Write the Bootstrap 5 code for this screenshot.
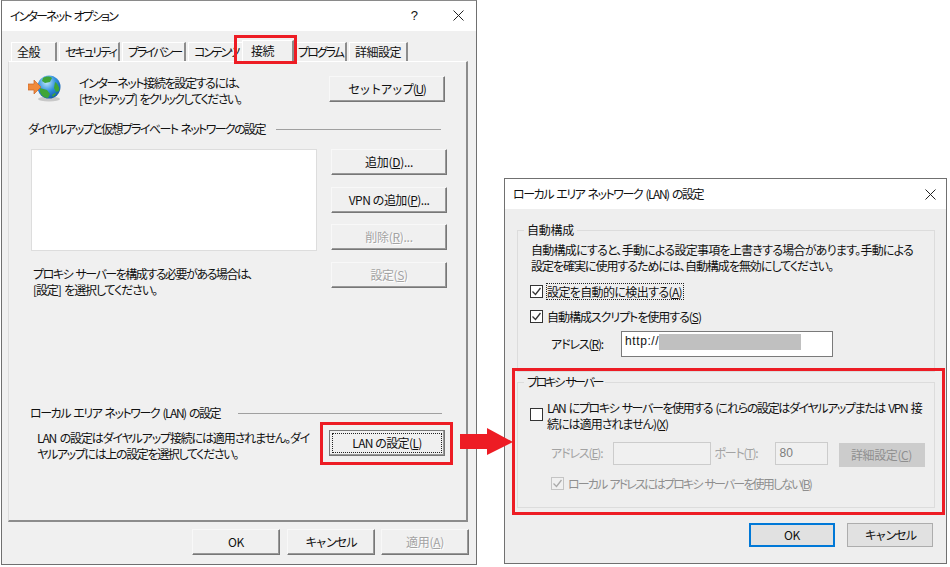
<!DOCTYPE html>
<html lang="ja">
<head>
<meta charset="utf-8">
<title>インターネット オプション</title>
<link href="https://cdn.jsdelivr.net/npm/bootstrap@5.3.0/dist/css/bootstrap.min.css" rel="stylesheet">
<style>
html,body{margin:0;width:950px;height:567px;overflow:hidden;background:#fff}
body{font-family:"Noto Sans CJK JP","Liberation Sans",sans-serif;font-size:12px;line-height:15.5px;color:#111;font-feature-settings:"palt";word-spacing:2px;position:relative}
.l25{letter-spacing:-.25px}.l30{letter-spacing:-.3px}.l33{letter-spacing:-.33px}.l40{letter-spacing:-.4px}.l45{letter-spacing:-.45px}.l50{letter-spacing:-.5px}.l55{letter-spacing:-.55px}.l62{letter-spacing:-.62px}.l65{letter-spacing:-.65px}.l74{letter-spacing:-.74px}.l98{letter-spacing:-.98px}.l102{letter-spacing:-1.02px}.l104{letter-spacing:-1.04px}.l112{letter-spacing:-1.12px}.l114{letter-spacing:-1.14px}.l115{letter-spacing:-1.15px}.l118{letter-spacing:-1.18px}.l128{letter-spacing:-1.28px}.l135{letter-spacing:-1.35px}.l138{letter-spacing:-1.38px}.l147{letter-spacing:-1.47px}.l158{letter-spacing:-1.58px}.l162{letter-spacing:-1.62px}.l184{letter-spacing:-1.84px}.l185{letter-spacing:-1.85px}.l186{letter-spacing:-1.86px}.l188{letter-spacing:-1.88px}.l200{letter-spacing:-1.98px}.l210{letter-spacing:-2.1px}.l215{letter-spacing:-2.15px}.l232{letter-spacing:-2.32px}
.ln{display:block;white-space:nowrap}
.dlg{position:absolute;background:#f0f0f0;border:1px solid #707070;display:flex;flex-direction:column}
.dlg-a{left:1px;top:0;width:476px;height:565px;border-top-color:#8a8a8a}
.dlg-b{left:504px;top:178px;width:443px;height:386px;background:#eeeeee}
.ttl{background:#fff;height:30px;flex:none;display:flex;align-items:center;padding-left:8px;padding-right:12px;white-space:nowrap}
.dlg-a .ttl{padding-bottom:1px}
.dlg-b .ttl{padding-left:8px;padding-right:10px}
.ttl-q{margin-right:35px;font-size:13px;font-family:"Liberation Sans",sans-serif}
.tabs{height:22px;margin-top:8px;flex:none;align-items:flex-end;flex-wrap:nowrap;padding-left:9px;position:relative}
.wtab{height:19px;padding:0 0 0 5px;color:#111;background:#f0f0f0;border:1px solid #fff;border-right:2px solid #8c8c8c;border-bottom:0;white-space:nowrap;overflow:hidden;margin-right:2px;line-height:18px;flex:none}
.wtab:hover{color:#111}
.wtab-on{height:22px;margin-left:-2px;margin-right:-4px;position:relative;z-index:2;padding-left:8px;line-height:20px;margin-bottom:-1px}
.w5{padding-left:7px}
.w1{width:46px}.w2{width:61px}.w3{width:64px}.w4{width:56px;margin-right:0}.w5{width:57px}.w6{width:52px}.w7{width:59px;margin-right:0}
.pane{margin-left:6px;width:460px;height:461px;flex:none;border:1px solid #fff;border-right:2px solid #8c8c8c;border-bottom:2px solid #8c8c8c;border-left-color:#dcdcdc;border-top-color:#fff;padding:14px 0 0 19px}
.btn.cbtn{--bs-btn-padding-y:0;--bs-btn-padding-x:0;font-size:12px;line-height:20px;border-radius:0;background:#f0f0f0;color:#111;border:1px solid;border-color:#f8f8f8 #777 #777 #f8f8f8;box-shadow:inset -1px -1px 0 #999;height:26px;width:116px;flex:none;font-family:inherit;white-space:nowrap}
.btn.cbtn.off{color:#a3a3a3;text-shadow:1px 1px 0 #fff;opacity:1}
.b-foc{padding:2px;background:#f0f0f0;border-color:#f8f8f8 #555 #555 #f8f8f8!important;outline:1px solid #777;outline-offset:-1px}
.foc-in{display:block;border:1px dotted #222;height:20px;line-height:18px}
.b-low{width:88px!important}
.row-a{height:26px}
.ico{width:34px;height:28px;flex:none;margin-right:17px;margin-top:-2px}
.ta{width:230px;margin-top:-1px;margin-right:20px}
.gh{display:flex;align-items:center;height:16px;white-space:nowrap}
.gh i{display:block;height:1px;background:#a0a0a0;flex:none}
.g1{margin-top:19px}.g1 i{width:165px;margin-left:11px}
.g2{margin-top:108px;margin-left:2px}.g2 i{width:204px;margin-left:18px}
.lst{width:286px;height:102px;background:#fff;border:1px solid;border-color:#6b6b6b #fff #fff #6b6b6b;outline:1px solid #ddd;outline-offset:-1px}
.main-r{margin-top:12px;height:148px;margin-left:3px}
.prox{margin-top:15px;margin-left:2px;line-height:16px}
.col-b{margin-left:14px;gap:11.7px}
.lan{margin-top:9px;margin-left:9px}
.lan-t{width:278px;margin-top:0;margin-right:14px}
.foot{margin-top:7px;margin-left:190px;gap:6.5px}
.grp{border:1px solid #dcdcdc;margin:13px 0 0 12px;width:418px;padding:0 0 0 12px;flex:none}
.grp legend{float:none;width:auto;font-size:12px;line-height:16px;padding:0 3px;margin:0 0 0 -6px;white-space:nowrap}
.grp-1{height:150px}
.grp-2{height:134px;margin-top:2px;}
.t-a{margin-top:4px;line-height:16px;margin-left:1px}
.form-check-input.chk{width:13px;height:13px;margin:0;border-radius:0;border:1px solid #333;background-color:#fff;flex:none;opacity:1;box-shadow:none}
.form-check-input.chk:checked{background-color:#fff;border-color:#333;background-image:url("data:image/svg+xml,%3Csvg xmlns='http://www.w3.org/2000/svg' viewBox='0 0 13 13'%3E%3Cpath d='M2.5 6.5l3 3 5-6.5' fill='none' stroke='%23333' stroke-width='1.3'/%3E%3C/svg%3E");background-size:13px}
.form-check-input.chk:disabled{border-color:#bdbdbd;opacity:1}
.form-check-input.chk:checked:disabled{background-color:#f0f0f0;border-color:#c4c4c4;background-image:url("data:image/svg+xml,%3Csvg xmlns='http://www.w3.org/2000/svg' viewBox='0 0 13 13'%3E%3Cpath d='M2.5 6.5l3 3 5-6.5' fill='none' stroke='%23aaa' stroke-width='1.3'/%3E%3C/svg%3E")}
.crow{display:flex;align-items:center;height:18px;gap:3px;white-space:nowrap}
.lab{padding:0 1px 0 0;border:1px dotted transparent;line-height:15px}
.lab-f{border-color:#222}
.cr1{margin-top:8px}.cr2{margin-top:7px}
.addr{margin-top:6px;height:26px;margin-left:21px;white-space:nowrap}
.fc{border-radius:0;font-size:12px;padding:0 3px;min-height:0;font-family:"Liberation Sans",sans-serif;color:#111;background:#fff;border:1px solid #7a7a7a}
.fc-u{width:212px;height:26px;margin-left:18px;display:flex;align-items:flex-start;padding-top:2px;line-height:15px}
.htp{letter-spacing:.6px;width:34px;flex:none}
.mask{display:block;width:142px;height:16px;background:#c0c0c0}
.prx-top{margin-top:10px;align-items:flex-start;height:auto;gap:4px}
.prx-top .chk{margin-top:8px}
.prx-t{line-height:15.5px}
.fr{margin-top:11px;height:25px;margin-left:21px;color:#a3a3a3;white-space:nowrap}
.fc-d{background:#f0f0f0;border-color:#ccc;height:23px;color:#7d7d7d;line-height:21px;padding:0 4px}
.fc-1{width:98px;margin-left:11px}
.fc-2{width:53px;margin-left:17px}
.lp{margin-left:3px;margin-top:3px}.la{margin-top:3px}
.btn.mbtn{--bs-btn-padding-y:0;--bs-btn-padding-x:0;border-radius:0;font-size:12px;font-family:inherit;width:86px;height:24px;line-height:20px;color:#111;background:#e1e1e1;border:1px solid #adadad;flex:none;white-space:nowrap}
.btn.mbtn.prim{border:2px solid #0078d7;line-height:20px}
.btn.mbtn.dis{background:#ccc;border-color:#ccc;color:#8f8f8f;margin-left:11px;margin-top:1px;opacity:1}
.cr3{margin-top:7px;margin-left:21px;color:#8f8f8f}
.foot2{margin:15px 0 0 244px;gap:12px}
.rbox{position:absolute;border:3px solid #ed1c24;pointer-events:none;z-index:5}
.r1{left:234px;top:35px;width:63px;height:29px}
.r2{left:320px;top:422px;width:133px;height:43px}
.r3{left:512px;top:368px;width:433px;height:147px}
.arw{position:absolute;left:460px;top:428px;z-index:5}
</style>
</head>
<body>

<div class="dlg dlg-a">
  <div class="ttl"><span class="l186">インターネット オプション</span><span class="ms-auto ttl-q">?</span>
    <svg width="11" height="11" viewBox="0 0 11 11"><path d="M.5.5l10 10M10.5.5l-10 10" stroke="#222" fill="none"/></svg>
  </div>
  <div class="nav tabs">
    <a class="nav-link wtab w1 l50">全般</a>
    <a class="nav-link wtab w2 l185">セキュリティ</a>
    <a class="nav-link wtab w3 l215">プライバシー</a>
    <a class="nav-link wtab w4 l210">コンテンツ</a>
    <a class="nav-link wtab w6 wtab-on active l50">接続</a>
    <a class="nav-link wtab w5 l200">プログラム</a>
    <a class="nav-link wtab w7 l50">詳細設定</a>
  </div>
  <div class="pane">
    <div class="d-flex row-a">
      <svg class="ico" viewBox="0 0 34 28">
        <defs><radialGradient id="gb" cx=".4" cy=".3" r=".8"><stop offset="0" stop-color="#bfe6fb"/><stop offset=".5" stop-color="#2f8fdc"/><stop offset="1" stop-color="#0d4f9c"/></radialGradient></defs>
        <ellipse cx="21" cy="25" rx="11" ry="2.5" fill="#c8c8c8"/>
        <circle cx="21" cy="13" r="11.5" fill="url(#gb)"/>
        <path d="M15 4c3-2 7-2 9 0l-2 4-5 1-3-2zM27 8c3 2 5 6 4 9l-3 1-2-4zM12 14l7 2 3 4-2 4c-4 0-7-3-8-6zM24 21l3-2 1 1-3 3z" fill="#3fa536"/>
        <path d="M0 10h6V6l7 7-7 7v-4H0z" fill="#f08a3c" stroke="#c9652a" stroke-width=".7"/>
      </svg>
      <div class="ta"><span class="ln l135">インターネット接続を設定するには、</span><span class="ln l158">[セットアップ] をクリックしてください。</span></div>
      <button class="btn cbtn l128" type="button">セットアップ(<u>U</u>)</button>
    </div>
    <div class="gh g1"><span class="l162">ダイヤルアップと仮想プライベート ネットワークの設定</span><i></i></div>
    <div class="d-flex main-r">
      <div>
        <div class="lst"></div>
        <div class="prox"><span class="ln l147">プロキシ サーバーを構成する必要がある場合は、</span><span class="ln l112">[設定] を選択してください。</span></div>
      </div>
      <div class="d-flex flex-column col-b">
        <button class="btn cbtn l30" type="button">追加(<u>D</u>)...</button>
        <button class="btn cbtn l55" type="button">VPN の追加(<u>P</u>)...</button>
        <button class="btn cbtn off l30" type="button">削除(<u>R</u>)...</button>
        <button class="btn cbtn off l45" type="button">設定(<u>S</u>)</button>
      </div>
    </div>
    <div class="gh g2"><span class="l147">ローカル エリア ネットワーク (LAN) の設定</span><i></i></div>
    <div class="d-flex lan">
      <div class="lan-t"><span class="ln l115">LAN の設定はダイヤルアップ接続には適用されません。ダイ</span><span class="ln l135">ヤルアップには上の設定を選択してください。</span></div>
      <button class="btn cbtn b-foc l65" type="button"><span class="foc-in">LAN の設定(<u>L</u>)</span></button>
    </div>
  </div>
  <div class="d-flex foot">
    <button class="btn cbtn b-low l33" type="button">OK</button>
    <button class="btn cbtn b-low l188" type="button">キャンセル</button>
    <button class="btn cbtn b-low off l30" type="button">適用(<u>A</u>)</button>
  </div>
</div>

<div class="dlg dlg-b">
  <div class="ttl"><span class="l147">ローカル エリア ネットワーク (LAN) の設定</span>
    <svg class="ms-auto" width="11" height="11" viewBox="0 0 11 11"><path d="M.5.5l10 10M10.5.5l-10 10" stroke="#222" fill="none"/></svg>
  </div>
  <fieldset class="grp grp-1">
    <legend class="l25">自動構成</legend>
    <div class="t-a"><span class="ln l74">自動構成にすると、手動による設定事項を上書きする場合があります。手動による</span><span class="ln l102">設定を確実に使用するためには、自動構成を無効にしてください。</span></div>
    <div class="crow cr1"><input class="form-check-input chk" type="checkbox" checked><span class="lab lab-f l62">設定を自動的に検出する(<u>A</u>)</span></div>
    <div class="crow cr2"><input class="form-check-input chk" type="checkbox" checked><span class="lab l104">自動構成スクリプトを使用する(<u>S</u>)</span></div>
    <div class="d-flex align-items-center addr"><span class="l114">アドレス(<u>R</u>):</span>
      <div class="fc fc-u"><span class="htp">http://</span><span class="mask"></span></div>
    </div>
  </fieldset>
  <fieldset class="grp grp-2">
    <legend class="l232">プロキシ サーバー</legend>
    <div class="crow prx-top"><input class="form-check-input chk" type="checkbox"><div class="prx-t"><span class="ln l138">LAN にプロキシ サーバーを使用する (これらの設定はダイヤルアップまたは VPN 接</span><span class="ln l98">続には適用されません)(<u>X</u>)</span></div></div>
    <div class="d-flex align-items-start fr">
      <span class="la l114">アドレス(<u>E</u>):</span>
      <div class="fc fc-d fc-1"></div>
      <span class="lp l118">ポート(<u>T</u>):</span>
      <div class="fc fc-d fc-2">80</div>
      <button class="btn mbtn dis l40" type="button" disabled>詳細設定(<u>C</u>)</button>
    </div>
    <div class="crow cr3"><input class="form-check-input chk" type="checkbox" checked disabled><span class="lab l184">ローカル アドレスにはプロキシ サーバーを使用しない(<u>B</u>)</span></div>
  </fieldset>
  <div class="d-flex foot2">
    <button class="btn mbtn prim l33" type="button">OK</button>
    <button class="btn mbtn l188" type="button">キャンセル</button>
  </div>
</div>

<div class="rbox r1"></div>
<div class="rbox r2"></div>
<div class="rbox r3"></div>
<svg class="arw" width="54" height="28" viewBox="0 0 54 28"><path d="M0 6h27V0l26 14-26 13v-6H0z" fill="#ed1c24"/></svg>

<script src="https://cdn.jsdelivr.net/npm/bootstrap@5.3.0/dist/js/bootstrap.bundle.min.js"></script>
</body>
</html>
